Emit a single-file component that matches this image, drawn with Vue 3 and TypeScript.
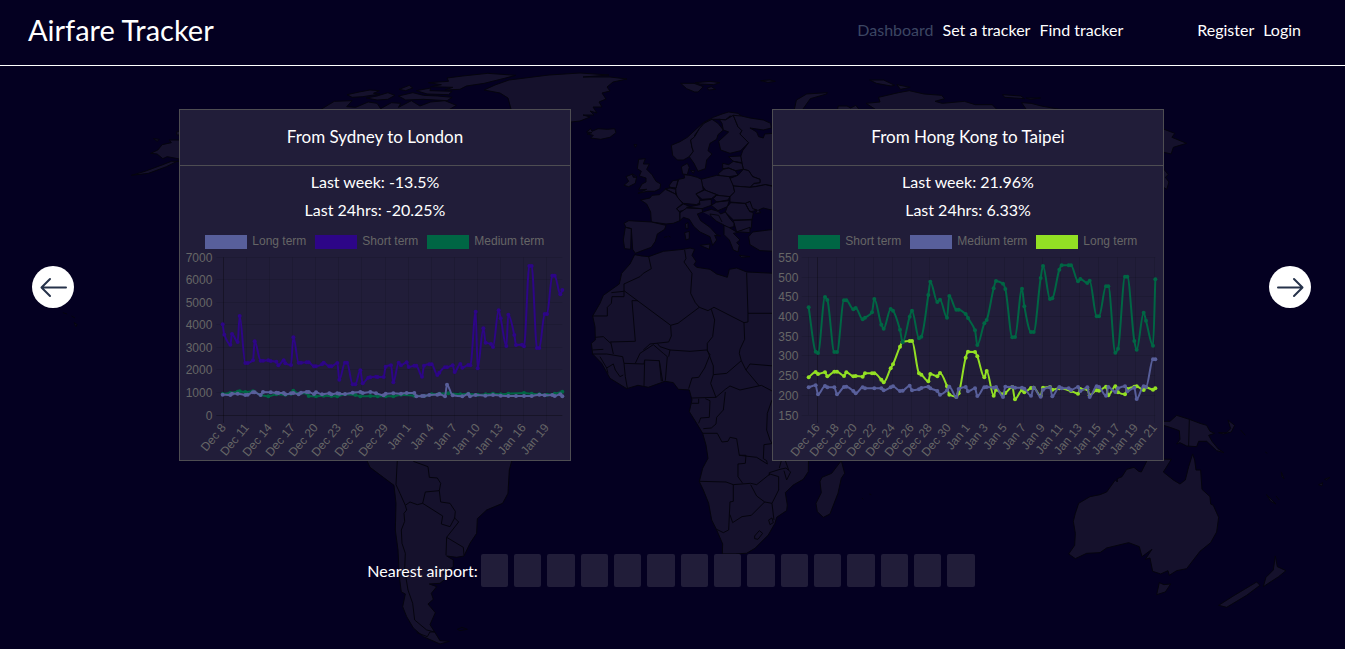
<script setup lang="ts">
type Pt = [number, number]
interface Series { label: string; color: string; swatch: number; data: number[] }
interface Route {
  title: string
  week: string
  day: string
  series: Series[]
  yLabels: string[]
  yEnd: number
  xLabels: string[]
  xStart: number
  xStep: number
  plotLeft: number
}

const PURPLE = '#2d0587'
const GREEN = '#006644'
const BLUE = '#585f9b'
const LIME = '#93e024'

const routes: Route[] = [
  {
    title: 'From Sydney to London',
    week: '-13.5%',
    day: '-20.25%',
    yLabels: ['7000', '6000', '5000', '4000', '3000', '2000', '1000', '0'],
    yEnd: 112,
    xLabels: ['Dec 8', 'Dec 11', 'Dec 14', 'Dec 17', 'Dec 20', 'Dec 23', 'Dec 26', 'Dec 29', 'Jan 1', 'Jan 4', 'Jan 7', 'Jan 10', 'Jan 13', 'Jan 16', 'Jan 19'],
    xStart: 145,
    xStep: 69.3,
    plotLeft: 145,
    series: [
      { label: 'Long term', color: BLUE, swatch: 90, data: [143,887,166,888,171,884,188,884,211,888,218,887,234,880,239,880,257,888,264,879,287,880,304,881,310,882,326,882,331,886,348,883,355,882,371,886,378,881,395,879,401,879,417,885,423,880,441,886,463,883,469,886,487,883,493,884,510,885,533,881,556,879,563,882,586,879,603,883,626,889,632,884,655,883,678,884,695,882,718,882,724,892,741,891,747,891,763,888,787,887,793,885,810,892,816,857,833,889,862,892,880,885,885,892,902,888,931,890,954,888,977,890,1000,891,1023,891,1047,891,1070,891,1093,887,1109,889,1132,888,1139,891,1156,886,1162,892] },
      { label: 'Short term', color: PURPLE, swatch: 420, data: [143,676,148,707,166,737,171,705,188,729,194,651,211,792,218,792,234,784,239,727,257,785,264,785,280,784,287,786,304,788,310,799,326,784,331,793,348,798,355,715,371,791,378,791,395,790,401,790,417,802,423,802,441,796,446,791,463,802,469,802,487,792,493,842,510,791,516,791,533,856,541,856,556,814,563,853,580,836,586,835,603,833,608,834,626,834,632,803,648,799,655,850,671,791,678,799,695,790,701,804,718,800,724,800,741,833,747,800,763,796,770,796,787,828,793,821,810,805,816,805,833,799,839,819,856,795,862,806,880,798,886,799,902,638,908,808,925,688,932,731,948,735,954,744,971,634,977,658,994,741,1000,647,1018,708,1023,738,1041,737,1047,742,1063,501,1070,501,1086,747,1093,747,1109,645,1116,645,1132,530,1139,530,1156,586,1162,573] },
      { label: 'Medium term', color: GREEN, swatch: 756, data: [143,885,166,882,188,878,194,877,211,879,234,877,257,888,280,892,304,886,331,887,348,884,355,875,371,884,395,882,401,891,423,892,446,890,469,891,487,892,510,886,541,888,556,892,586,891,608,892,632,892,655,892,678,887,718,890,747,891,770,886,793,884,820,883,856,886,880,884,908,887,932,886,954,884,977,886,1000,884,1047,882,1070,884,1093,886,1116,887,1139,884,1162,878] },
    ],
  },
  {
    title: 'From Hong Kong to Taipei',
    week: '21.96%',
    day: '6.33%',
    yLabels: ['550', '500', '450', '400', '350', '300', '250', '200', '150'],
    yEnd: 91,
    xLabels: ['Dec 16', 'Dec 18', 'Dec 20', 'Dec 22', 'Dec 24', 'Dec 26', 'Dec 28', 'Dec 30', 'Jan 1', 'Jan 3', 'Jan 5', 'Jan 7', 'Jan 9', 'Jan 11', 'Jan 13', 'Jan 15', 'Jan 17', 'Jan 19', 'Jan 21'],
    xStart: 148,
    xStep: 56.2,
    plotLeft: 122,
    series: [
      { label: 'Short term', color: GREEN, swatch: 90, data: [122,625,143,758,150,762,171,594,178,603,199,759,207,759,228,604,235,604,256,631,263,627,284,661,291,656,312,640,319,600,340,677,347,689,368,630,375,635,396,692,404,730,425,653,432,635,453,718,460,713,481,588,487,548,508,609,516,602,537,656,544,591,565,632,572,632,593,645,600,657,621,694,628,738,649,673,656,663,677,568,684,546,705,554,712,570,733,715,741,714,762,569,769,622,789,699,797,699,818,537,825,501,846,600,853,598,874,512,881,499,902,499,909,499,930,547,937,540,958,552,965,545,986,652,993,652,1014,562,1021,562,1042,761,1050,749,1071,533,1078,533,1099,726,1106,752,1127,641,1134,665,1155,740,1162,541] },
      { label: 'Medium term', color: BLUE, swatch: 426, data: [122,865,143,859,150,886,171,861,178,865,199,865,207,886,228,864,235,863,256,876,263,883,284,865,291,868,319,868,340,868,347,874,368,865,375,862,396,876,404,875,425,860,432,874,453,871,460,867,481,863,487,868,508,876,516,887,537,874,544,863,565,894,572,870,593,864,600,877,621,868,628,891,649,865,656,864,677,866,684,864,705,894,712,863,733,864,741,866,762,866,769,869,789,890,797,866,818,893,825,872,846,865,853,892,874,864,881,868,902,868,909,873,930,864,937,876,958,865,965,894,986,862,993,864,1014,890,1021,864,1042,879,1050,868,1071,862,1078,877,1099,866,1106,900,1127,862,1134,864,1155,781,1162,781] },
      { label: 'Long term', color: LIME, swatch: 804, data: [122,835,143,819,150,825,171,820,178,832,199,818,207,818,228,831,235,820,256,832,263,831,284,833,291,823,312,823,319,823,340,842,347,850,368,808,375,796,396,743,404,728,425,726,432,726,453,823,460,827,481,847,487,825,508,832,516,822,537,862,544,887,565,893,572,883,593,776,600,758,621,759,628,772,649,835,656,816,677,890,684,872,705,886,712,882,733,864,741,901,762,874,769,880,789,867,797,866,818,890,825,866,846,864,853,872,874,868,909,876,930,884,937,870,958,871,965,889,986,874,993,875,1014,863,1021,889,1042,862,1050,880,1071,886,1078,870,1099,863,1106,862,1127,873,1134,865,1155,872,1162,868] },
    ],
  },
]

// Plot data is held on a grid three times finer than the chart's own units.
const px = (x: number) => x / 3 - 5
const py = (y: number) => y / 3 - 125
const PLOT_TOP = py(475)
const PLOT_BOTTOM = py(948)
const PLOT_RIGHT = px(1162)

function points(d: number[]): Pt[] {
  const out: Pt[] = []
  for (let i = 0; i < d.length; i += 2) out.push([px(d[i]), py(d[i + 1])])
  return out
}

// Monotone cubic curve: flat at local extremes, so it never overshoots a point.
function curve(d: number[]): string {
  const p = points(d)
  const slope = p.slice(1).map((q, i) => (q[1] - p[i][1]) / (q[0] - p[i][0]))
  const tangent = p.map((_, i) => {
    if (i === 0) return slope[0]
    if (i === p.length - 1) return slope[i - 1]
    const a = slope[i - 1]
    const b = slope[i]
    return a * b <= 0 ? 0 : (2 * a * b) / (a + b)
  })
  let path = `M${p[0][0]} ${p[0][1]}`
  for (let i = 1; i < p.length; i++) {
    const h = (p[i][0] - p[i - 1][0]) / 3
    path += `C${p[i - 1][0] + h} ${p[i - 1][1] + h * tangent[i - 1]} ${p[i][0] - h} ${p[i][1] - h * tangent[i]} ${p[i][0]} ${p[i][1]}`
  }
  return path
}

const crisp = (v: number) => Math.floor(v) + 0.5
const tickX = (r: Route, i: number) => crisp(px(r.xStart + i * r.xStep))
const tickY = (r: Route, i: number) =>
  crisp(PLOT_TOP + (i * (PLOT_BOTTOM - PLOT_TOP)) / (r.yLabels.length - 1))
</script>

<template>
  <div class="page">
    <svg class="map" viewBox="0 0 1345 649" preserveAspectRatio="xMidYMin slice" aria-hidden="true">
      <!-- Greenland -->
      <path d="M509 80L549 75 580 73 609 75 583 77 610 77 627 79 613 82 607 87 610 91 602 93 606 99 599 102 602 107 593 107 597 113 590 111 594 115 583 115 590 117 580 121 571 122 571 130 505 130 511 109 508 98 500 93 484 90 495 85Z" />
      <!-- Alaska and the Canadian Arctic -->
      <g transform="translate(20 60) scale(.3571 .3333)">
        <path d="M450 214L440 214 438 224 450 226M450 240L418 240 424 248 398 254 386 270 366 280 384 282 400 296 412 290 432 294 450 298Z" />
        <path d="M450 304L440 304 410 320 360 340 312 346 350 334 400 314 424 304ZM374 236L390 238 384 244Z" />
        <path d="M840 150L880 124 930 122 915 140 940 142 975 126 1000 130 1010 146 1040 128 1066 130 1060 142 1096 122 1120 138 1150 126 1190 122 1222 136 1200 150Z" />
        <path d="M916 104L950 96 980 90 1006 92 990 100 1008 102 960 110 930 112ZM1000 108L1030 98 1050 106 1030 118 1000 120 970 114ZM1062 88L1090 76 1100 84 1080 92ZM1060 108L1100 98 1130 106 1170 108 1210 112 1196 122 1130 118 1080 120ZM1110 92L1150 84 1148 92 1210 94 1200 104 1140 102Z" />
        <path d="M1144 68L1200 64 1196 54 1240 48 1310 40 1388 46 1360 54 1330 62 1300 70 1250 78 1232 88 1190 90 1212 82 1150 80 1180 74Z" />
        <path d="M120 758L132 762M144 768L154 774M152 788L160 794 156 800Z" />
      </g>
      <!-- Europe -->
      <g transform="translate(570 60) scale(.3333)">
        <path d="M50 216L62 206 66 214 84 206 112 208 134 206 138 218 120 232 92 238 62 234 70 226 52 222 66 218Z" />
        <path d="M332 70L372 70 400 80 384 96 374 96 350 86ZM375 68L420 64 450 68 430 74 390 72ZM412 84L424 80 436 88 416 90ZM572 62L600 60 616 64 594 67Z" />
        <path d="M304 256L330 245 352 232 380 206 400 188 430 172 456 162 476 156 504 160 514 168 496 172 480 168 466 180 448 178 426 178 402 190 388 206 374 226 374 232 362 240 366 262 370 274 358 290 340 300 322 300 308 286Z" />
        <path d="M370 274L366 262 362 240 374 230 388 206 402 190 426 178 444 190 460 210 444 224 440 238 420 250 414 272 426 282 410 300 406 326 384 334 372 310 358 290Z" />
        <path d="M448 178L466 180 490 166 504 200 516 212 510 222 536 248 512 272 480 280 452 270 446 244 476 216 460 210 456 190Z" />
        <path d="M490 166L514 168 540 174 580 180 602 190 604 204 580 210 540 204 560 216 566 230 580 234 584 222 612 220 612 378 586 374 556 380 540 382 552 370 570 368 570 358 548 350 536 332 520 328 516 310 512 290 518 272 536 248 510 222 516 212 504 200Z" />
        <path d="M476 290L512 288 516 308 490 304ZM458 310L476 314 490 304 516 310 520 328 496 332 476 324 458 326ZM446 340L460 328 476 324 496 332 504 346 478 350 448 348Z" />
        <path d="M504 346L520 328 536 332 548 350 570 358 570 368 552 370 540 382 490 378 478 356Z" />
        <path d="M394 358L440 346 478 350 490 378 494 396 480 410 452 408 408 392 396 376Z" />
        <path d="M326 358L344 354 342 344 360 346 382 352 394 358 400 390 378 402 394 424 380 434 340 430 322 412 316 390Z" />
        <path d="M334 320L352 310 358 322 352 344 338 342ZM362 332L374 332 370 340ZM298 376L308 362 324 360 318 384 300 382ZM286 386L300 384 318 388 316 402Z" />
        <path d="M212 420L240 414 246 406 268 404 286 388 316 402 326 416 338 430 320 446 330 458 330 482 310 490 288 492 244 486 242 456 230 432Z" />
        <path d="M162 490L176 482 244 486 288 496 284 508 262 522 256 544 244 562 222 570 196 580 188 568 184 506 168 502ZM166 502L184 506 182 568 164 566 160 540Z" />
        <path d="M204 400L230 388 206 390 216 372 228 366 228 354 208 348 214 334 202 326 206 298 226 296 220 312 238 312 230 328 246 344 258 364 272 372 270 386 254 394 232 394ZM162 376L176 364 168 350 188 342 200 350 196 370 176 380ZM186 342L190 352 200 352M192 254L200 254 196 262Z" />
        <path d="M378 402L404 390 440 404 424 416 396 418ZM350 442L390 434 388 422 424 418 424 436 396 446ZM320 446L340 432 362 440 348 450 328 454ZM430 416L440 406 480 410 474 420 440 426ZM424 436L440 426 478 422 472 440 444 452Z" />
        <path d="M472 440L482 428 526 430 536 450 550 460 546 480 490 480 466 456ZM490 482L546 478 544 504 500 516ZM526 430L540 424 556 452 540 456Z" />
        <path d="M490 378L540 382 556 380 586 374 612 380 612 452 580 444 566 450 572 458 556 460 562 450 548 446 540 424 526 430 480 426 480 410 494 396Z" />
        <path d="M330 458L350 444 396 446 398 456 382 462 392 482 420 502 440 524 452 528 434 526 440 540 428 556 420 530 390 516 372 500 358 478 340 472 330 482ZM390 556L420 552 418 568ZM344 518L358 514 358 536 348 540ZM346 492L354 488 354 506 348 506ZM282 532L292 530M296 528L302 532" />
        <path d="M398 456L424 448 444 454 452 462 466 456 480 476 492 490 492 500 474 504 460 494 440 484 424 470 420 462 446 466 456 486" />
        <path d="M462 496L476 502 500 516 540 502 540 518 512 516 490 520 510 540 500 548 508 556 504 576 490 570 478 540 462 524ZM508 586L540 590 514 592Z" />
        <path d="M536 530L548 516 612 508 612 574 570 572 540 554Z" />
        <!-- Africa -->
        <path d="M194 584L216 588 236 590 280 574 340 568 360 564 374 568 366 586 378 604 372 614 380 622 420 628 440 642 472 652 478 628 500 624 530 636 612 640 720 900 715 1235 700 1258 670 1275 646 1298 652 1335 650 1352 620 1372 615 1390 595 1425 555 1465 530 1480 495 1482 457 1482 458 1452 440 1410 425 1380 416 1330 400 1290 388 1265 398 1225 414 1195 408 1155 398 1120 380 1090 358 1055 366 1020 358 990 325 988 310 968 285 964 235 982 204 976 170 986 120 955 95 910 68 882 64 850 76 840 75 800 68 768 90 730 100 706 148 672 155 640 180 612Z" />
        <path class="border" d="M236 590L244 626 220 640 210 650 162 672 162 710 126 710 124 730 112 742 112 768 68 768M162 692L302 796 324 790 388 742 414 752 432 742 522 788M344 570L348 596 342 606 366 640 362 700 376 728 388 742M530 638L534 760 612 760M534 760L534 786 522 788 524 838 510 868M204 722L186 722 196 844 122 846M124 698L162 694M302 796L304 828 296 846 240 852 220 870M424 748L434 780 428 830 412 850M76 832L100 830 122 850" />
      </g>
      <g transform="translate(570 340) scale(.3333)">
        <path class="border" d="M66 42L110 42 158 50 162 70 222 72 224 60 268 62 278 124M162 70L166 110 172 144M224 60L222 138M196 70L210 40 250 14 280 40 292 50 286 122M300 30L360 34 410 30 420 44 404 84 386 112 366 114 356 146M262 10L270 20 300 30 296 50M412 10L412 30 430 78 430 104 470 100 514 62 528 90 568 138M514 62L508 40 510 28M528 90L540 72 612 78M430 104L422 130 438 172 366 174M438 172L466 148 480 138 510 150 574 136 612 156M466 156L460 210 440 232 438 252 424 264 400 266M386 250L392 234 418 232 420 182 406 176M366 190L386 190 386 176M398 280L442 280 456 306 474 304 480 292 500 296 508 346 528 346 526 370 504 372 504 410 518 430M388 424L468 426 490 434 542 430 560 434 600 402 626 410 626 450 606 490 584 486 560 468 542 434M508 346L560 352 592 372 590 362 580 356 582 314 612 310M490 434L490 484 480 486 476 570 460 578 440 568M480 524L488 548 516 530 544 526 584 486M606 490L612 540M554 588L568 572 578 580 564 598 554 596ZM596 540L606 534 610 548 600 554ZM606 180L592 220 590 270 600 300 606 310M90 50L110 84 130 72 136 90 150 110 160 105M110 84L114 100M122 5L130 42M68 30L100 28M268 62L274 124" />
      </g>
      <g transform="translate(640 440) scale(.3333)">
        <path d="M604 62L614 100 604 115 594 160 570 222 550 232 532 215 528 190 544 158 540 125 546 112 575 100Z" />
        <path class="border" d="M388 106L388 98 420 88 438 84 452 96 440 120 432 92M424 62L418 84M436 62L446 90M666 174L670 178M688 162L694 164" />
      </g>
      <!-- South America -->
      <g transform="translate(340 450) scale(.3333)">
        <path d="M80 30L90 52 130 82 162 106 168 160 166 240 174 300 178 380 184 426 196 432 188 470 200 500 220 534 250 560 300 582 328 574 300 572 284 546 270 524 286 488 264 462 280 448 274 430 290 410 268 402 300 400 320 384 310 368 340 350 340 330 320 318 350 322 372 318 390 280 410 250 412 206 440 180 488 160 504 130 508 60 516 30Z" />
        <path class="border" d="M172 30L168 104 180 130 196 166 200 180 192 190 194 214 184 240 186 280 196 310 194 360 204 420 218 460 224 510 260 540 284 546M196 166L210 156 232 164 248 160 256 126 298 122 302 156 330 160 346 184 344 204 356 216 320 262 318 316M248 160L308 198 304 222 330 230 344 204M298 122L302 100 292 84 268 82 264 50 220 34M320 262L370 292 372 316M230 548L262 560 270 546 284 546M352 538L366 532 382 538 360 542Z" />
      </g>
      <!-- Oceania -->
      <g transform="translate(1000 380) scale(.3333)">
        <path d="M444 236L424 276 416 274 402 262 380 268 366 290 352 296 352 306 346 300 320 336 300 344 270 350 236 370 226 400 220 424 226 460 224 496 206 522 226 536 260 520 300 518 320 504 386 488 418 500 426 530 456 508 436 538 450 534 458 574 482 582 504 572 508 586 530 572 560 566 600 514 632 488 650 456 656 412 640 376 632 372 630 350 606 328 602 270 588 270 584 240 578 222 566 260 556 300 540 312 520 300 490 276 514 238Z" />
        <path d="M478 608L492 614 512 612 496 636 470 644ZM490 124L510 124 530 106 568 118 600 130 620 136 630 154 644 160 626 166 636 184 654 206 672 218 650 212 620 184 596 184 590 200 560 198 540 188 530 192 540 178 538 152 510 142 490 136ZM568 118L566 198M656 158L680 158 692 146 684 120 704 136 694 156 670 162Z" />
        <path d="M826 528L832 560 858 572 836 590 790 620 798 592 820 570ZM770 606L780 616 740 646 680 682 656 676 700 648ZM800 344L828 372 812 364ZM828 348L838 360M844 276L852 296 846 290ZM956 314L968 308 966 318ZM974 298L990 292 980 300ZM722 150L736 166M796 216L802 220" />
      </g>
      <!-- Northern Russia -->
      <g transform="translate(770 60) scale(.3667 .3333)">
        <path d="M272 60L310 60 340 76 330 78 290 70ZM346 74L382 82 356 88ZM66 150L72 120 100 102 156 98 154 102 110 116 88 150ZM184 150L186 138 210 138 220 144 234 136 244 150ZM262 130L300 126 296 112 350 98 380 92 420 102 468 106 476 116 450 124 470 130 530 124 560 134 606 134 620 150 290 150ZM634 104L684 108 694 116 640 112ZM698 114L738 114 710 118ZM686 128L712 130 740 138 800 150 700 150Z" />
        <path d="M1070 206L1104 220 1096 232 1136 250 1100 262 1094 282 1070 276ZM1070 322L1086 344 1078 352 1088 366 1082 388 1070 380Z" />
      </g>
    </svg>

    <header class="topbar">
      <h1 class="brand">Airfare Tracker</h1>
      <nav class="nav">
        <div class="links">
          <a class="current" href="#dashboard" aria-current="page">Dashboard</a>
          <a href="#set">Set a tracker</a>
          <a href="#find">Find tracker</a>
        </div>
        <div class="links">
          <a href="#register">Register</a>
          <a href="#login">Login</a>
        </div>
      </nav>
    </header>

    <main>
      <section class="carousel">
        <button class="arrow" type="button" aria-label="Previous routes">
          <svg viewBox="0 0 42 42"><path d="M34 21.5H10M18 13L9.500 21.500 18 30" /></svg>
        </button>
        <div class="cards">
          <article v-for="r in routes" :key="r.title" class="card">
            <h2>{{ r.title }}</h2>
            <p>Last week: {{ r.week }}</p>
            <p>Last 24hrs: {{ r.day }}</p>
            <svg class="chart" viewBox="0 0 390 236" role="img" :aria-label="r.title">
              <g v-for="s in r.series" :key="s.label">
                <rect :x="px(s.swatch)" y="11" width="42" height="14" :fill="s.color" />
                <text :x="px(s.swatch + 142)" y="21">{{ s.label }}</text>
              </g>
              <g class="grid">
                <path v-for="(l, i) in r.yLabels" :key="l" :class="{ axis: l === '0' }" :d="`M${px(r.plotLeft) - 7} ${tickY(r, i)}H${PLOT_RIGHT}`" />
                <path v-if="r.plotLeft !== r.xStart" :d="`M${crisp(px(r.plotLeft))} ${PLOT_TOP}V${PLOT_BOTTOM}`" />
                <path v-for="(l, i) in r.xLabels" :key="l" :class="{ axis: i === 0 }" :d="`M${tickX(r, i)} ${PLOT_TOP}V${PLOT_BOTTOM + 8}`" />
              </g>
              <text v-for="(l, i) in r.yLabels" :key="l" class="end" :x="px(r.yEnd)" :y="tickY(r, i) + 4">{{ l }}</text>
              <text v-for="(l, i) in r.xLabels" :key="l" class="end" :transform="`translate(${tickX(r, i) + 3} ${PLOT_BOTTOM + 13}) rotate(-50)`">{{ l }}</text>
              <g v-for="s in [...r.series].reverse()" :key="s.label">
                <path class="line" :d="curve(s.data)" :stroke="s.color" />
                <circle v-for="(p, i) in points(s.data)" :key="i" :cx="p[0]" :cy="p[1]" r="2" :fill="s.color" />
              </g>
            </svg>
          </article>
        </div>
        <button class="arrow" type="button" aria-label="Next routes">
          <svg viewBox="0 0 42 42"><path d="M9 21.500H33M25 13L33.500 21.500 25 30" /></svg>
        </button>
      </section>

      <section class="airport">
        <span>Nearest airport:</span>
        <div class="tiles">
          <span v-for="n in 15" :key="n" class="tile"></span>
        </div>
      </section>
    </main>
  </div>
</template>

<style>
html,
body {
  margin: 0;
  background: #040021;
}
</style>

<style scoped>
.page {
  position: relative;
  min-height: 100vh;
  box-sizing: border-box;
  overflow: hidden;
  color: #fff;
  background: #040021;
  font: 16px/28px Lato, "Open Sans", sans-serif;
}
.map {
  position: absolute;
  top: 0;
  left: 0;
  width: 100%;
}
.map path {
  fill: #15112c;
  stroke: #05040e;
  stroke-width: 1px;
  stroke-linejoin: round;
  vector-effect: non-scaling-stroke;
}
.map .border {
  fill: none;
}
.topbar {
  position: relative;
  display: flex;
  align-items: center;
  justify-content: space-between;
  height: 66px;
  padding: 0 44px 6px 28px;
  box-sizing: border-box;
  border-bottom: 1px solid #fff;
}
.brand {
  margin: 0;
  font-size: 29px;
  font-weight: 400;
}
.nav {
  display: flex;
  gap: 74px;
}
.links {
  display: flex;
  gap: 9px;
}
.links a {
  color: #fff;
  text-decoration: none;
}
.links .current {
  color: #3c4663;
}
main {
  position: relative;
}
.carousel {
  display: flex;
  align-items: center;
  justify-content: space-between;
  padding: 43px 34px 0 32px;
}
.cards {
  display: flex;
  gap: 201px;
}
.card {
  width: 390px;
  border: 1px solid #4e4d52;
  background: #211d39;
  text-align: center;
}
.card h2 {
  margin: 0 0 2px;
  padding: 13px 0 14px;
  border-bottom: 1px solid #4e4d52;
  font-size: 17px;
  line-height: 28px;
  font-weight: 400;
}
.card p {
  margin: 0;
}
.chart {
  display: block;
  width: 100%;
  overflow: visible;
}
.chart text {
  fill: #666;
  font: 12px "Liberation Sans", Arial, sans-serif;
}
.chart .end {
  text-anchor: end;
}
.grid path {
  fill: none;
  stroke: rgba(0, 0, 0, 0.1);
}
.grid .axis {
  stroke: rgba(0, 0, 0, 0.3);
}
.line {
  fill: none;
  stroke-width: 2px;
}
.arrow {
  width: 42px;
  height: 42px;
  margin-top: 4px;
  padding: 0;
  border: 0;
  border-radius: 50%;
  background: #fff;
  cursor: pointer;
}
.arrow svg {
  display: block;
}
.arrow path {
  fill: none;
  stroke: #26324a;
  stroke-width: 2px;
  stroke-linecap: round;
  stroke-linejoin: round;
}
.airport {
  display: flex;
  align-items: center;
  justify-content: center;
  gap: 3px;
  margin-top: 93px;
  padding-right: 3px;
}
.tiles {
  display: grid;
  grid-template-columns: repeat(15, 1fr);
  gap: 6px;
  width: 494px;
}
.tile {
  height: 33px;
  border-radius: 2px;
  background: #211d39;
}
</style>
